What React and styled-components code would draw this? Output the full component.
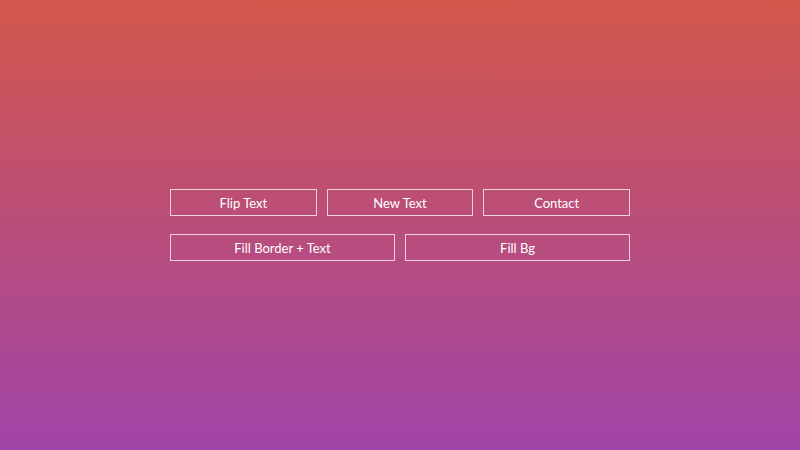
import React from "react";
import styled, { createGlobalStyle } from "styled-components";

const Global = createGlobalStyle`
  html, body { margin: 0; padding: 0; height: 100%; }
  body { font-family: "Nunito", Lato, "Open Sans", sans-serif; }
  #root { height: 100%; }
`;

const Page = styled.div`
  height: 100vh;
  background: linear-gradient(180deg, #d3574b 0%, #a044a8 100%);
  display: flex;
  align-items: center;
  justify-content: center;
`;

const Stack = styled.div`
  width: 460px;
  display: flex;
  flex-direction: column;
  gap: 18px;
`;

const Row = styled.div`
  display: grid;
  grid-template-columns: repeat(${(p) => p.$cols}, 1fr);
  gap: 10px;
`;

const Button = styled.button`
  height: 27px;
  box-sizing: border-box;
  border: 1px solid rgba(255, 255, 255, 0.75);
  background: transparent;
  color: #fff;
  font-family: Lato, "Open Sans", sans-serif;
  font-size: 13px;
  padding: 0;
  cursor: pointer;
`;

export default function App() {
  return (
    <>
      <Global />
      <Page>
        <Stack>
          <Row $cols={3}>
            <Button>Flip Text</Button>
            <Button>New Text</Button>
            <Button>Contact</Button>
          </Row>
          <Row $cols={2}>
            <Button>Fill Border + Text</Button>
            <Button>Fill Bg</Button>
          </Row>
        </Stack>
      </Page>
    </>
  );
}
